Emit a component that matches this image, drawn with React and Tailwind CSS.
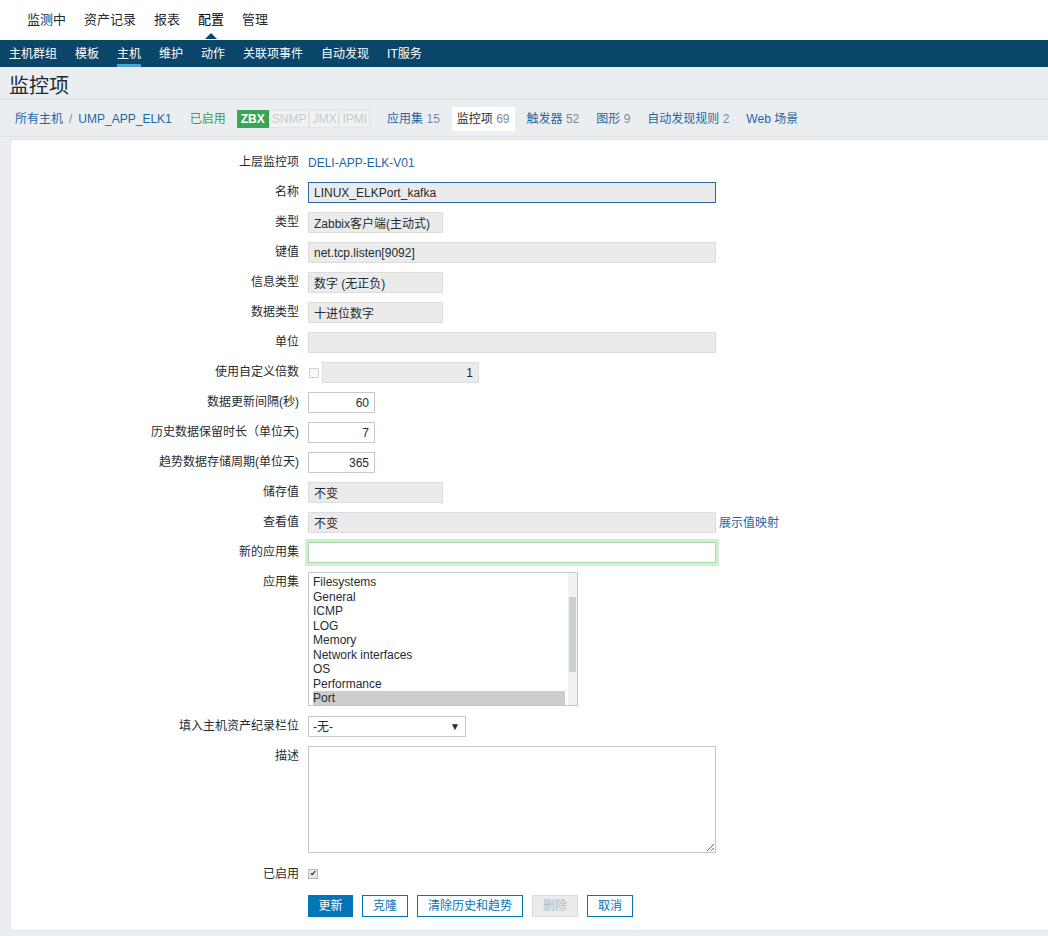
import React from 'react';

const font = { fontFamily: '"Liberation Sans", Arial, "Noto Sans CJK SC", sans-serif' };

const topMenu = ['监测中', '资产记录', '报表', '配置', '管理'];
const subMenu = ['主机群组', '模板', '主机', '维护', '动作', '关联项事件', '自动发现', 'IT服务'];
const apps = ['Filesystems', 'General', 'ICMP', 'LOG', 'Memory', 'Network interfaces', 'OS', 'Performance', 'Port'];

const Row = ({ label, children, className = 'min-h-[21px] items-center' }) => (
    <div className={`flex ${className}`}>
        <div className="w-[297px] shrink-0 pr-[9px] text-right text-[#1f2c33] leading-[21px]">{label}</div>
        <div className="flex items-center">{children}</div>
    </div>
);

const ReadOnly = ({ value, w }) => (
    <input
        readOnly
        defaultValue={value}
        className={`${w} h-[21px] px-[5px] bg-[#ebebeb] border border-[#dcdcdc] text-[#1f2c33] text-[12px] outline-none`}
    />
);

const NumInput = ({ value }) => (
    <input
        readOnly
        defaultValue={value}
        className="w-[67px] h-[21px] px-[5px] bg-white border border-[#c7c7c7] text-right text-[#1f2c33] text-[12px] outline-none"
    />
);

const Tab = ({ name, count, active }) => (
    <span className={`px-[5px] py-[3px] ${active ? 'bg-white text-[#1f2c33]' : 'text-[#1f65a6]'}`}>
        {name}
        {count && <span className="text-[#768d99]"> {count}</span>}
    </span>
);

export default function App() {
    return (
        <div className="min-h-[936px] bg-[#ebeef0] text-[12px] text-[#1f2c33]" style={font}>
            {/* top menu */}
            <div className="h-[40px] bg-white flex items-center pl-[18px] text-[13px]">
                {topMenu.map(m => (
                    <span key={m} className={`relative px-[9px] ${m === '配置' ? 'text-[#000]' : 'text-[#1f2c33]'}`}>
                        {m}
                        {m === '配置' && (
                            <span className="absolute left-1/2 -translate-x-1/2 top-[23px] w-0 h-0 border-l-[6px] border-r-[6px] border-b-[6px] border-l-transparent border-r-transparent border-b-[#0a466a]" />
                        )}
                    </span>
                ))}
            </div>
            {/* sub menu */}
            <div className="h-[27px] bg-[#0a466a] flex items-stretch text-white">
                {subMenu.map(m => (
                    <span key={m} className="px-[9px] flex items-center">
                        <span className={`h-full flex items-center border-b-[3px] pt-[3px] ${m === '主机' ? 'border-[#4ba2d6]' : 'border-transparent'}`}>{m}</span>
                    </span>
                ))}
            </div>
            {/* title */}
            <div className="h-[32px] flex items-center pt-[7px] pl-[9px] text-[20px] text-[#1f2c33] border-b border-[#dfe4e7]">监控项</div>
            {/* breadcrumbs */}
            <div className="h-[38px] flex items-center pt-[2px] pl-[10px] border-t border-b border-[#dfe4e7]">
                <span className="px-[5px] text-[#1f65a6]">所有主机</span>
                <span className="mx-[1px] text-[#768d99]">/</span>
                <span className="px-[5px] text-[#1f65a6]">UMP_APP_ELK1</span>
                <span className="ml-[13px] text-[#429e47]">已启用</span>
                <div className="ml-[11px] flex h-[18px] text-[12px] leading-[16px]">
                    <span className="px-[3px] bg-[#3aa553] text-white border border-[#3aa553] font-bold">ZBX</span>
                    <span className="px-[2px] text-[#c5cdd2] border border-[#dfe4e7] bg-[#f0f2f3]">SNMP</span>
                    <span className="px-[2px] text-[#c5cdd2] border border-[#dfe4e7] bg-[#f0f2f3]">JMX</span>
                    <span className="px-[2px] text-[#c5cdd2] border border-[#dfe4e7] bg-[#f0f2f3]">IPMI</span>
                </div>
                <div className="ml-[12px] flex items-center gap-[7px]">
                    <Tab name="应用集" count="15" />
                    <Tab name="监控项" count="69" active />
                    <Tab name="触发器" count="52" />
                    <Tab name="图形" count="9" />
                    <Tab name="自动发现规则" count="2" />
                    <Tab name="Web 场景" />
                </div>
            </div>
            {/* form */}
            <div className="mt-[2px] ml-[10px] bg-white border border-[#dfe4e7] border-r-0 pt-[12px] pb-[13px] flex flex-col gap-[9px]">
                <Row label="上层监控项">
                    <span className="text-[#1f65a6]">DELI-APP-ELK-V01</span>
                </Row>
                <Row label="名称">
                    <input
                        readOnly
                        defaultValue="LINUX_ELKPort_kafka"
                        className="w-[408px] h-[21px] px-[5px] bg-[#ebebeb] border border-[#2e6a9c] text-[#1f2c33] text-[12px] outline-none"
                    />
                </Row>
                <Row label="类型"><ReadOnly value="Zabbix客户端(主动式)" w="w-[135px]" /></Row>
                <Row label="键值"><ReadOnly value="net.tcp.listen[9092]" w="w-[408px]" /></Row>
                <Row label="信息类型"><ReadOnly value="数字 (无正负)" w="w-[135px]" /></Row>
                <Row label="数据类型"><ReadOnly value="十进位数字" w="w-[135px]" /></Row>
                <Row label="单位"><ReadOnly value="" w="w-[408px]" /></Row>
                <Row label="使用自定义倍数">
                    <span className="ml-[1px] w-[10px] h-[10px] border border-[#d0d0d0] bg-[#f7f7f7] rounded-[1px]" />
                    <input
                        readOnly
                        defaultValue="1"
                        className="ml-[3px] w-[157px] h-[21px] px-[5px] bg-[#ebebeb] border border-[#dcdcdc] text-right text-[#1f2c33] text-[12px] outline-none"
                    />
                </Row>
                <Row label="数据更新间隔(秒)"><NumInput value="60" /></Row>
                <Row label="历史数据保留时长（单位天)"><NumInput value="7" /></Row>
                <Row label="趋势数据存储周期(单位天)"><NumInput value="365" /></Row>
                <Row label="储存值"><ReadOnly value="不变" w="w-[135px]" /></Row>
                <Row label="查看值">
                    <ReadOnly value="不变" w="w-[408px]" />
                    <span className="ml-[3px] text-[#1f65a6]">展示值映射</span>
                </Row>
                <Row label="新的应用集">
                    <input
                        readOnly
                        className="w-[408px] h-[21px] px-[5px] bg-white border border-[#a9d5ab] shadow-[0_0_0_3px_#d4edd5] outline-none"
                    />
                </Row>
                <Row label="应用集" className="items-start">
                    <div className="relative w-[270px] h-[134px] border border-[#c7c7c7] bg-white overflow-hidden">
                        <div className="pt-[2px] pl-[4px] pr-[12px] text-[12px] leading-[14.5px] text-[#1f2c33]">
                            {apps.map(a => (
                                <div key={a} className={a === 'Port' ? 'bg-[#cdcdcd]' : ''}>{a}</div>
                            ))}
                        </div>
                        <div className="absolute right-0 top-0 bottom-0 w-[9px] bg-[#f1f1f1]">
                            <div className="absolute left-[1px] right-[1px] top-[24px] h-[75px] bg-[#c9ced3]" />
                        </div>
                    </div>
                </Row>
                <Row label="填入主机资产纪录栏位" className="items-center mt-[1px]">
                    <div className="w-[158px] h-[21px] border border-[#c7c7c7] bg-white flex items-center justify-between pl-[4px] pr-[5px]">
                        <span>-无-</span>
                        <span className="text-[10px] text-[#1f2c33]">▼</span>
                    </div>
                </Row>
                <Row label="描述" className="items-start">
                    <textarea readOnly className="w-[408px] h-[107px] border border-[#c7c7c7] bg-white outline-none" />
                </Row>
                <Row label="已启用" className="min-h-[24px] items-center">
                    <span className="w-[10px] h-[10px] border border-[#b5b5b5] bg-[#e9e9e9] flex items-center justify-center text-[8px] leading-none text-[#333]">✔</span>
                </Row>
                <div className="flex pl-[297px] gap-[9px] h-[22px] items-stretch">
                    <button className="w-[45px] bg-[#0275b8] border border-[#0275b8] text-white">更新</button>
                    <button className="w-[46px] bg-white border border-[#0275b8] text-[#0275b8]">克隆</button>
                    <button className="w-[106px] bg-white border border-[#0275b8] text-[#0275b8]">清除历史和趋势</button>
                    <button className="w-[46px] bg-[#ebebeb] border border-[#dcdcdc] text-[#acbbc2]">删除</button>
                    <button className="w-[46px] bg-white border border-[#0275b8] text-[#0275b8]">取消</button>
                </div>
            </div>
        </div>
    );
}
